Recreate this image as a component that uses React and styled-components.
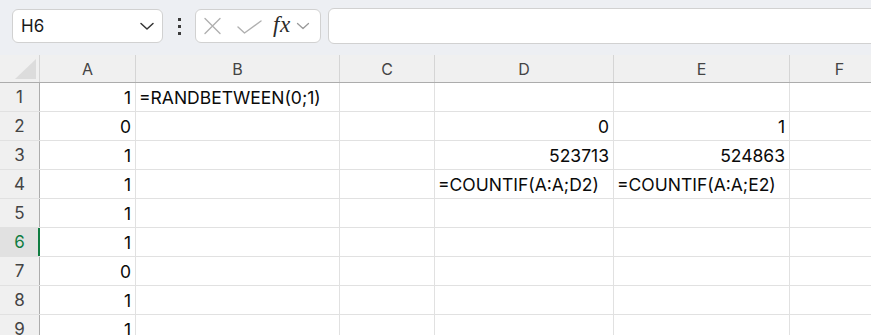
import React from 'react';
import styled, { createGlobalStyle } from 'styled-components';

const GlobalStyle = createGlobalStyle`
  body {
    margin: 0;
    background: #ffffff;
    font-family: Inter, "Liberation Sans", sans-serif;
    overflow: hidden;
  }
`;

const columns = [
  { name: 'A', width: 96 },
  { name: 'B', width: 204 },
  { name: 'C', width: 95 },
  { name: 'D', width: 179 },
  { name: 'E', width: 176 },
  { name: 'F', width: 100 },
];

// each row: values by column letter; numbers go right, formulas left
const rows = [
  { A: '1', B: '=RANDBETWEEN(0;1)' },
  { A: '0', D: '0', E: '1' },
  { A: '1', D: '523713', E: '524863' },
  { A: '1', D: '=COUNTIF(A:A;D2)', E: '=COUNTIF(A:A;E2)' },
  { A: '1' },
  { A: '1' },
  { A: '0' },
  { A: '1' },
  { A: '1' },
];

const selectedRow = 6;

const isNumber = (v) => /^-?\d+(\.\d+)?$/.test(v);

const App = () => {
  return (
    <Page>
      <GlobalStyle />
      <Toolbar>
        <NameBox>
          <span>H6</span>
          <svg width="16" height="10" viewBox="0 0 16 10" fill="none">
            <path d="M2 2.5 L8 8 L14 2.5" stroke="#333" strokeWidth="1.5" strokeLinecap="round" strokeLinejoin="round" />
          </svg>
        </NameBox>
        <Dots>
          <i />
          <i />
          <i />
        </Dots>
        <FormulaTools>
          <svg width="17" height="18" viewBox="0 0 17 18" fill="none">
            <path d="M1 1.5 L16 16.5 M16 1.5 L1 16.5" stroke="#b0b0b0" strokeWidth="1.4" strokeLinecap="round" />
          </svg>
          <svg width="25" height="14" viewBox="0 0 25 14" fill="none">
            <path d="M1 7 L7.5 13 L24 1" stroke="#b0b0b0" strokeWidth="1.4" strokeLinecap="round" strokeLinejoin="round" />
          </svg>
          <Fx>fx</Fx>
          <svg width="14" height="8" viewBox="0 0 14 8" fill="none">
            <path d="M1.5 1.5 L7 6.5 L12.5 1.5" stroke="#9a9a9a" strokeWidth="1.3" strokeLinecap="round" strokeLinejoin="round" />
          </svg>
        </FormulaTools>
        <FormulaInput />
      </Toolbar>

      <Sheet>
        <HeaderRow>
          <Corner>
            <Triangle />
          </Corner>
          {columns.map((c) => (
            <ColHeader key={c.name} $width={c.width}>
              {c.name}
            </ColHeader>
          ))}
        </HeaderRow>
        {rows.map((r, i) => (
          <Row key={i}>
            <RowHeader $selected={i + 1 === selectedRow}>{i + 1}</RowHeader>
            {columns.map((c) => {
              const v = r[c.name] || '';
              return (
                <Cell key={c.name} $width={c.width} $right={isNumber(v)}>
                  {v}
                </Cell>
              );
            })}
          </Row>
        ))}
      </Sheet>
    </Page>
  );
};

export default App;

const Page = styled.div`
  width: 871px;
  height: 335px;
  overflow: hidden;
`;

const Toolbar = styled.div`
  display: flex;
  align-items: center;
  height: 55px;
  padding: 0 0 3px 12px;
  box-sizing: border-box;
  background: #edeff3;
`;

const NameBox = styled.div`
  display: flex;
  align-items: center;
  justify-content: space-between;
  width: 151px;
  height: 34px;
  box-sizing: border-box;
  padding: 0 7px 0 8px;
  background: #fff;
  border: 1px solid #d1d1d1;
  border-radius: 6px;
  font-size: 17px;
  color: #1a1a1a;
`;

const Dots = styled.div`
  display: flex;
  flex-direction: column;
  align-items: center;
  justify-content: center;
  gap: 4px;
  width: 32px;

  i {
    display: block;
    width: 3px;
    height: 3px;
    background: #3c3c3c;
  }
`;

const FormulaTools = styled.div`
  display: flex;
  align-items: center;
  width: 126px;
  height: 34px;
  box-sizing: border-box;
  padding: 0 4px 0 8px;
  gap: 0;
  background: #fff;
  border: 1px solid #d1d1d1;
  border-radius: 6px;

  svg:nth-child(2) {
    margin-left: 16px;
    margin-top: 2px;
  }
`;

const Fx = styled.span`
  font-family: "Liberation Serif", "DejaVu Serif", serif;
  font-style: italic;
  font-size: 23px;
  color: #2a2a2a;
  margin-left: 11px;
  margin-right: 5px;
  margin-top: -2px;
  letter-spacing: 0.5px;
`;

const FormulaInput = styled.div`
  flex: 1;
  height: 34px;
  margin-left: 7px;
  margin-right: -12px;
  background: #fff;
  border: 1px solid #d1d1d1;
  border-radius: 6px;
`;

const Sheet = styled.div`
  display: flex;
  flex-direction: column;
`;

const HeaderRow = styled.div`
  display: flex;
  height: 28px;
  box-sizing: border-box;
  background: #f0f0f0;
  border-bottom: 1px solid #acacac;
`;

const Corner = styled.div`
  position: relative;
  width: 40px;
  flex-shrink: 0;
  box-sizing: border-box;
  border-right: 1px solid #d5d5d5;
`;

const Triangle = styled.div`
  position: absolute;
  right: 3px;
  bottom: 3px;
  width: 21px;
  height: 20px;
  background: #dcdcdc;
  clip-path: polygon(100% 0, 100% 100%, 0 100%);
`;

const ColHeader = styled.div`
  width: ${(p) => p.$width}px;
  flex-shrink: 0;
  box-sizing: border-box;
  border-right: 1px solid #d5d5d5;
  text-align: center;
  font-size: 16px;
  line-height: 28px;
  color: #444;
`;

const Row = styled.div`
  display: flex;
  height: 29px;
  box-sizing: border-box;
  border-bottom: 1px solid #e1e1e1;
`;

const RowHeader = styled.div`
  width: 40px;
  flex-shrink: 0;
  box-sizing: border-box;
  background: ${(p) => (p.$selected ? '#e1e1e1' : '#f0f0f0')};
  border-right: ${(p) => (p.$selected ? '2px solid #107c41' : '1px solid #acacac')};
  padding-left: ${(p) => (p.$selected ? '1px' : '0')};
  text-align: center;
  font-size: 17px;
  line-height: 28px;
  color: ${(p) => (p.$selected ? '#107c41' : '#444')};
`;

const Cell = styled.div`
  width: ${(p) => p.$width}px;
  flex-shrink: 0;
  box-sizing: border-box;
  border-right: 1px solid #e1e1e1;
  padding: 1px 4px 0 3px;
  text-align: ${(p) => (p.$right ? 'right' : 'left')};
  white-space: nowrap;
  overflow: visible;
  font-size: 17.5px;
  line-height: 28px;
  color: #0a0a0a;
  position: relative;
  z-index: 1;
`;
